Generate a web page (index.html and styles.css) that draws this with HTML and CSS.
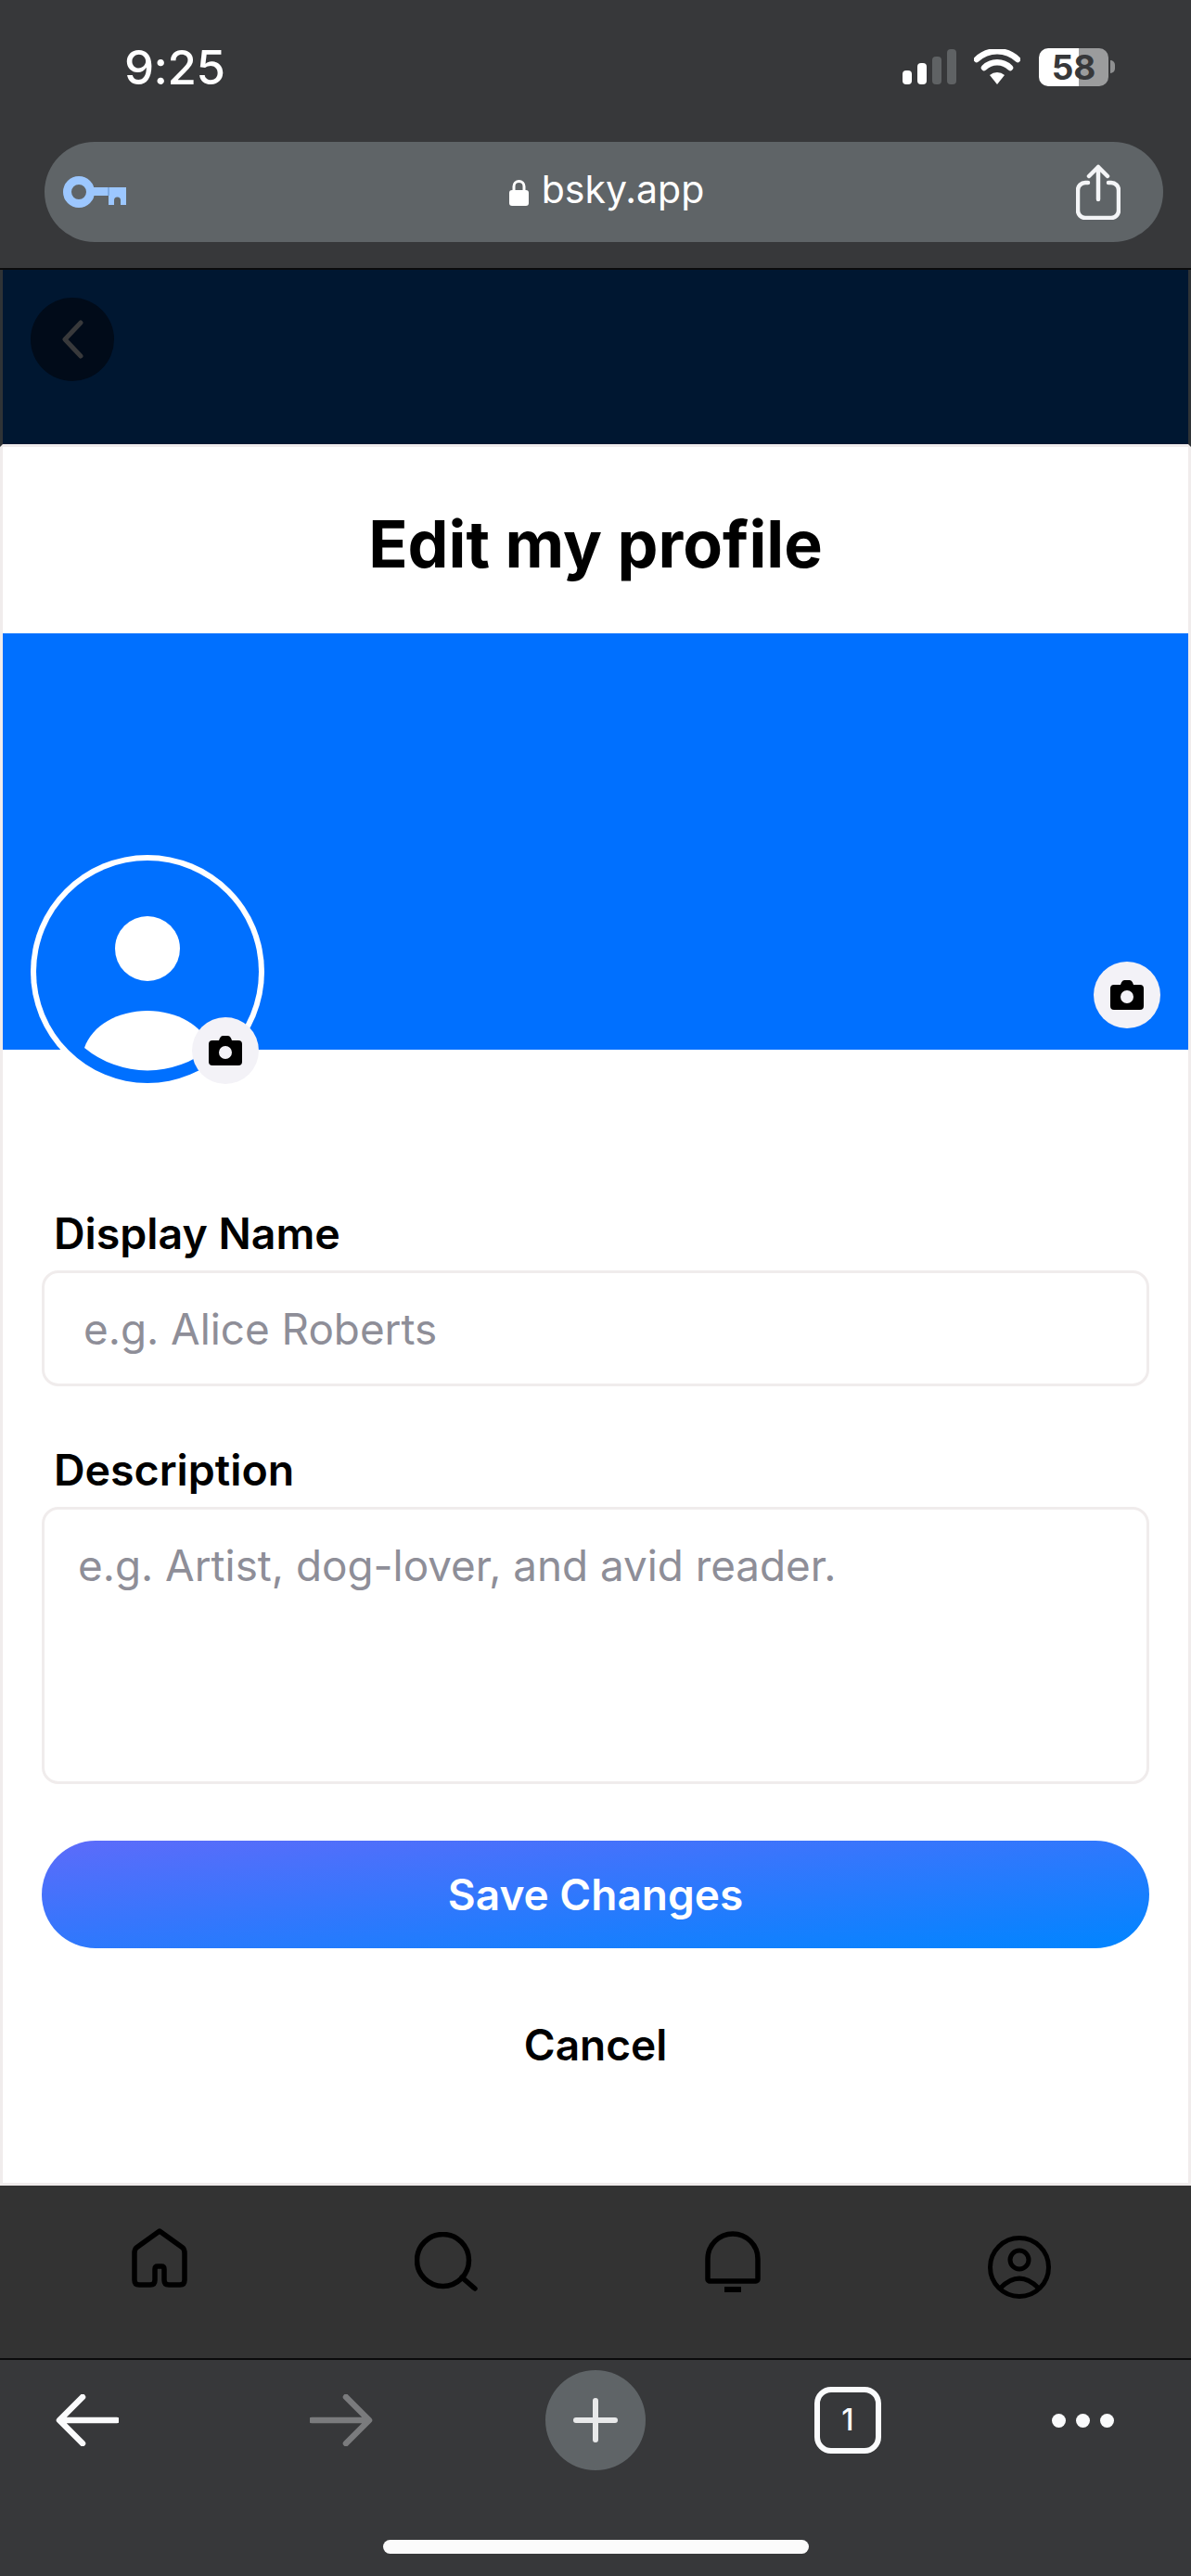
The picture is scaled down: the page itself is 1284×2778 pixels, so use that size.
FILE: index.html
```html
<!DOCTYPE html>
<html lang="en">
<head>
  <meta charset="UTF-8">
  <meta name="viewport" content="width=device-width, initial-scale=1.0">
  <title>Edit my profile</title>
  <link rel="stylesheet" href="styles.css">
</head>
<body>
  <div class="browser-top">
    <div class="status-bar">
      <span class="time">9:25</span>
      <div class="status-icons">
        <svg class="signal" width="58" height="38" viewBox="0 0 58 38">
          <rect x="0" y="23" width="10" height="15" rx="4" fill="#fff"/>
          <rect x="16" y="15" width="10" height="23" rx="4" fill="#fff"/>
          <rect x="32" y="8" width="10" height="30" rx="4" fill="#5f6264"/>
          <rect x="48" y="0" width="10" height="38" rx="4" fill="#5f6264"/>
        </svg>
        <svg class="wifi" width="50" height="38" viewBox="0 0 50 38">
          <path d="M3 11a32 32 0 0 1 44 0" fill="none" stroke="#fff" stroke-width="6.500" stroke-linecap="round"/>
          <path d="M11 20a20 20 0 0 1 28 0" fill="none" stroke="#fff" stroke-width="6.500" stroke-linecap="round"/>
          <path d="M17 28a12 12 0 0 1 16 0l-8 10z" fill="#fff"/>
        </svg>
        <div class="battery"><span class="battery-num">58</span></div>
        <div class="battery-tip"></div>
      </div>
    </div>
    <div class="url-bar">
      <svg width="68" height="34" viewBox="0 0 68 34">
        <circle cx="17" cy="17" r="12.500" fill="none" stroke="#9cc7ff" stroke-width="9"/>
        <path d="M30 12h38v19H49V21H30z" fill="#9cc7ff"/>
        <path d="M55 31v-5a3.500 3.500 0 0 1 7 0v5z" fill="#5f6467"/>
        <path d="M49 12v9" stroke="#5f8ec9" stroke-width="1"/>
      </svg>
      <div class="url-text">
        <svg width="21" height="29" viewBox="0 0 21 29">
          <path d="M5 13V8a5.500 5.500 0 0 1 11 0v5" fill="none" stroke="#fff" stroke-width="3"/>
          <rect x="0" y="12" width="21" height="17" rx="3" fill="#fff"/>
        </svg>
        <span>bsky.app</span>
      </div>
      <svg width="48" height="60" viewBox="0 0 48 60">
        <path d="M13 20H10a8 8 0 0 0-8 8v22a8 8 0 0 0 8 8h28a8 8 0 0 0 8-8V28a8 8 0 0 0-8-8h-3" fill="none" stroke="#f4f5f7" stroke-width="4.500" stroke-linecap="round"/>
        <path d="M24 38V3M14 13L24 3l10 10" fill="none" stroke="#f4f5f7" stroke-width="4.500" stroke-linecap="round" stroke-linejoin="round"/>
      </svg>
    </div>
  </div>

  <div class="page">
    <div class="page-header">
      <div class="back-btn">
        <svg width="26" height="42" viewBox="0 0 26 42">
          <path d="M22 3L5 21l17 18" fill="none" stroke="#38393b" stroke-width="5" stroke-linecap="round" stroke-linejoin="round"/>
        </svg>
      </div>
    </div>

    <div class="modal">
      <h1>Edit my profile</h1>
      <div class="banner">
        <div class="avatar">
          <svg width="252" height="252" viewBox="0 0 252 252">
            <circle cx="126" cy="126" r="126" fill="#fff"/>
            <circle cx="126" cy="126" r="120" fill="#0070ff"/>
            <circle cx="126" cy="101" r="35" fill="#fff"/>
            <path d="M58 208C66 184 94 168 126 168S186 184 194 208A107 107 0 0 1 58 208z" fill="#fff"/>
          </svg>
          <div class="cam-badge avatar-badge">
            <svg class="cam" width="36" height="32" viewBox="0 0 36 32">
              <path fill-rule="evenodd" d="M11 5l1-2.500Q13 0 15 0h6q2 0 3 2.500L25 5h7q4 0 4 4v19q0 4-4 4H4q-4 0-4-4V9q0-4 4-4zm7 6a7 7 0 1 0 0 14 7 7 0 0 0 0-14z" fill="#000"/>
            </svg>
          </div>
        </div>
        <div class="cam-badge banner-badge">
          <svg class="cam" width="36" height="32" viewBox="0 0 36 32">
            <path fill-rule="evenodd" d="M11 5l1-2.500Q13 0 15 0h6q2 0 3 2.500L25 5h7q4 0 4 4v19q0 4-4 4H4q-4 0-4-4V9q0-4 4-4zm7 6a7 7 0 1 0 0 14 7 7 0 0 0 0-14z" fill="#000"/>
          </svg>
        </div>
      </div>

      <form class="form">
        <label class="field-label">Display Name</label>
        <div class="input name-input">e.g. Alice Roberts</div>
        <label class="field-label desc-label">Description</label>
        <div class="input desc-input">e.g. Artist, dog-lover, and avid reader.</div>
        <div class="save-btn">Save Changes</div>
        <div class="cancel-btn">Cancel</div>
      </form>
    </div>
  </div>

  <div class="app-nav">
    <svg width="60" height="64" viewBox="0 0 60 64">
      <path d="M30 3L55 21Q57 23 57 27V56Q57 61 52 61H40Q35 61 35 56V44Q35 41 32 41H28Q25 41 25 44V56Q25 61 20 61H8Q3 61 3 56V27Q3 23 5 21z" fill="none" stroke="#000" stroke-width="5.500" stroke-linejoin="round"/>
    </svg>
    <svg class="nav-search" width="68" height="64" viewBox="0 0 68 64">
      <circle cx="30.500" cy="30.500" r="28" fill="none" stroke="#000" stroke-width="5.500"/>
      <path d="M51 49l14 12" stroke="#000" stroke-width="5.500" stroke-linecap="round"/>
    </svg>
    <svg class="nav-bell" width="60" height="66" viewBox="0 0 60 66">
      <path d="M3 52V30a27 27 0 0 1 54 0V52a2 2 0 0 1-2 2H5a2 2 0 0 1-2-2z" fill="none" stroke="#000" stroke-width="5.500" stroke-linejoin="round"/>
      <path d="M21 60h18v6H21z" fill="#000"/>
    </svg>
    <svg class="nav-profile" width="68" height="68" viewBox="0 0 68 68">
      <circle cx="34" cy="34" r="31.500" fill="none" stroke="#000" stroke-width="5"/>
      <circle cx="34" cy="26" r="10" fill="none" stroke="#000" stroke-width="5"/>
      <path d="M14 56Q34 36 54 56" fill="none" stroke="#000" stroke-width="5"/>
    </svg>
  </div>

  <div class="browser-bottom">
    <div class="toolbar">
      <svg width="68" height="56" viewBox="0 0 68 56">
        <path d="M29 3L4 28l25 25M5 28h61" fill="none" stroke="#fafbfc" stroke-width="6.500" stroke-linecap="round" stroke-linejoin="round"/>
      </svg>
      <svg class="forward" width="68" height="56" viewBox="0 0 68 56">
        <path d="M39 3l25 25-25 25M63 28H2" fill="none" stroke="#7a7b7d" stroke-width="6.500" stroke-linecap="round" stroke-linejoin="round"/>
      </svg>
      <div class="new-tab">
        <svg width="48" height="48" viewBox="0 0 48 48">
          <path d="M24 3v42M3 24h42" stroke="#e8e9ea" stroke-width="6" stroke-linecap="round"/>
        </svg>
      </div>
      <div class="tab-count">1</div>
      <div class="more-dots"><i></i><i></i><i></i></div>
    </div>
    <div class="home-bar"></div>
  </div>
</body>
</html>
```

FILE: styles.css
```css
* {
  margin: 0;
  padding: 0;
  box-sizing: border-box;
}

body {
  width: 1284px;
  height: 2778px;
  overflow: hidden;
  display: flex;
  flex-direction: column;
  background: #37383a;
  font-family: Inter, 'Liberation Sans', sans-serif;
}

/* browser chrome, top */
.browser-top {
  height: 291px;
  flex-shrink: 0;
  background: #37383a;
  border-bottom: 2px solid #0b0b0c;
  padding-top: 48px;
}

.status-bar {
  height: 48px;
  display: flex;
  align-items: center;
  justify-content: space-between;
  padding: 0 82px 0 134px;
}

.time {
  color: #fff;
  font-size: 51px;
  font-weight: 500;
  letter-spacing: -0.5px;
}

.status-icons {
  display: flex;
  align-items: center;
}

.signal {
  margin-right: 19px;
}

.wifi {
  margin-right: 20px;
}

.battery {
  width: 75px;
  height: 41px;
  border-radius: 10px;
  background: linear-gradient(90deg, #fff 0 57%, #9b9c9d 57% 100%);
  display: flex;
  align-items: center;
  justify-content: center;
}

.battery-num {
  color: #37383a;
  font-size: 37px;
  font-weight: 700;
}

.battery-tip {
  width: 5px;
  height: 14px;
  margin-left: 2px;
  border-radius: 0 5px 5px 0;
  background: #8f9091;
}

.url-bar {
  height: 108px;
  margin: 57px 30px 0 48px;
  padding: 0 46px 0 20px;
  border-radius: 54px;
  background: #5f6467;
  display: flex;
  align-items: center;
  justify-content: space-between;
}

.url-text {
  display: flex;
  align-items: center;
  gap: 14px;
  margin-left: 12px;
  color: #fff;
  font-size: 41px;
}

.url-text span {
  margin-top: -6px;
}

/* page under the chrome */
.page {
  height: 2066px;
  flex-shrink: 0;
  border-left: 3px solid #f0ecec;
  border-right: 3px solid #f0ecec;
  border-bottom: 3px solid #f0ecec;
  background: #fff;
}

.page-header {
  height: 191px;
  margin: 0 -3px;
  background: #001731;
  padding: 30px 0 0 30px;
  border-left: 3px solid #2f3336;
  border-right: 3px solid #2f3336;
  border-bottom: 3px solid #f0ecec;
}

.back-btn {
  width: 90px;
  height: 90px;
  border-radius: 50%;
  background: #010b19;
  display: flex;
  align-items: center;
  justify-content: center;
}

.modal h1 {
  height: 201px;
  padding-top: 70px;
  text-align: center;
  font-size: 69.800px;
  line-height: 70px;
  font-weight: 700;
  color: #000;
}

.banner {
  position: relative;
  height: 449px;
  background: #0070ff;
}

.avatar {
  position: absolute;
  left: 30px;
  top: 239px;
  width: 252px;
  height: 252px;
}

.cam-badge {
  position: absolute;
  width: 72px;
  height: 72px;
  border-radius: 50%;
  background: #f3f2f7;
  display: flex;
  align-items: center;
  justify-content: center;
}

.avatar-badge {
  right: 6px;
  bottom: 5px;
}

.banner-badge {
  right: 30px;
  bottom: 23px;
}

.form {
  padding: 174px 42px 0;
}

.field-label {
  display: block;
  margin-left: 13px;
  height: 64px;
  font-size: 46.500px;
  line-height: 48px;
  font-weight: 600;
  color: #000;
}

.desc-label {
  margin-top: 66px;
}

.input {
  border: 3px solid #f0ecec;
  border-radius: 18px;
  font-size: 45.800px;
  color: #8e8e98;
}

.name-input {
  height: 125px;
  padding-left: 42px;
  line-height: 122px;
}

.desc-input {
  height: 299px;
  padding: 34px 0 0 36px;
  line-height: 54px;
}

.save-btn {
  height: 116px;
  margin-top: 61px;
  border-radius: 58px;
  background: linear-gradient(to bottom right, #5d6bfa, #0085ff);
  color: #fff;
  font-size: 46px;
  font-weight: 600;
  line-height: 116px;
  text-align: center;
}

.cancel-btn {
  margin-top: 78px;
  text-align: center;
  color: #000;
  font-size: 46px;
  line-height: 52px;
  font-weight: 600;
}

/* app tab bar behind the dim layer */
.app-nav {
  height: 188px;
  flex-shrink: 0;
  background: #333;
  border-bottom: 2px solid #0b0b0c;
  display: flex;
  align-items: flex-start;
  padding: 46px 0 0 142px;
  gap: 245px;
}

.nav-search {
  margin-top: 4px;
}

.nav-bell {
  margin-top: 3px;
}

.nav-profile {
  margin-top: 8px;
}

/* browser chrome, bottom */
.browser-bottom {
  flex: 1;
  background: #37383a;
}

.toolbar {
  height: 130px;
  display: flex;
  align-items: center;
  padding-left: 60px;
  gap: 184px;
}

.forward {
  margin-left: 22px;
}

.new-tab {
  width: 108px;
  height: 108px;
  margin: 0 -2px 0 2px;
  border-radius: 50%;
  background: #5f6467;
  display: flex;
  align-items: center;
  justify-content: center;
}

.tab-count {
  width: 72px;
  height: 72px;
  border: 6px solid #fafbfc;
  border-radius: 18px;
  color: #fafbfc;
  font-size: 32px;
  font-weight: 500;
  line-height: 60px;
  text-align: center;
}

.more-dots {
  display: flex;
  gap: 11px;
}

.more-dots i {
  width: 15px;
  height: 15px;
  border-radius: 50%;
  background: #fafbfc;
}

.home-bar {
  width: 459px;
  height: 15px;
  margin: 64px 0 0 413px;
  border-radius: 8px;
  background: #fbfbfb;
}
```
